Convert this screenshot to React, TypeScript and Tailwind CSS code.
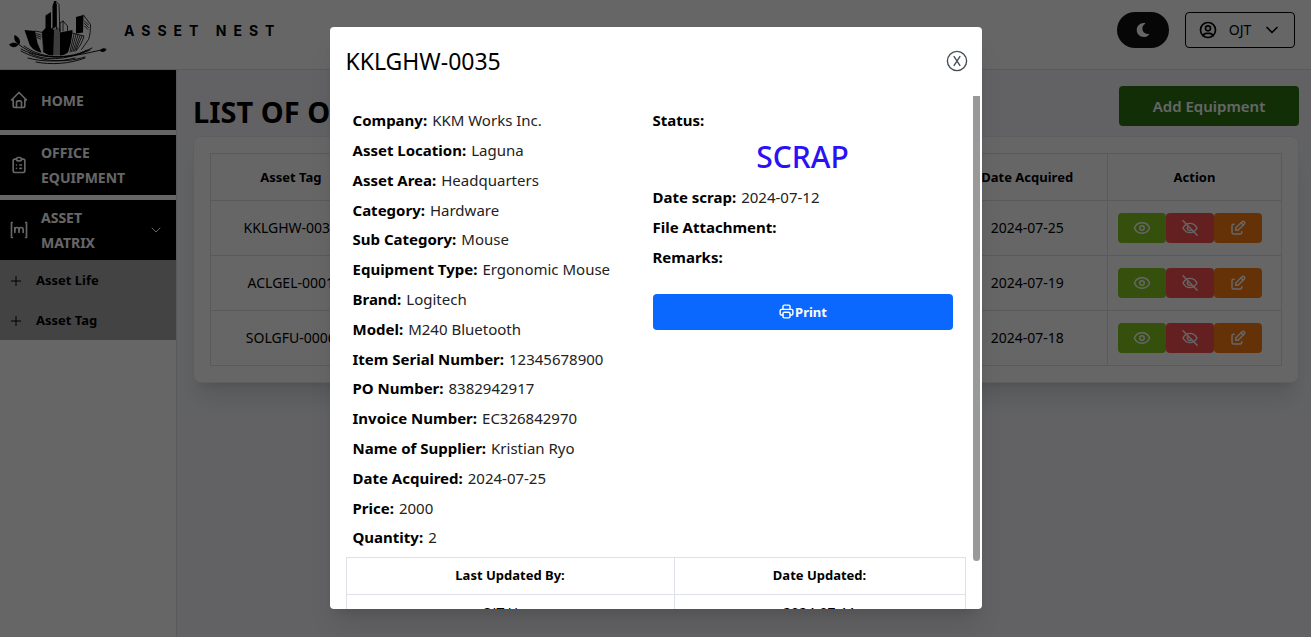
import type { ReactNode } from "react";
import { Eye } from "lucide-react";
import {
  TbBrandMatrix,
  TbChevronDown,
  TbClipboardList,
  TbEdit,
  TbHome,
  TbPlus,
  TbPrinter,
  TbUserCircle,
} from "react-icons/tb";
import { FaMoon } from "react-icons/fa";

const details: [string, string][] = [
  ["Company", "KKM Works Inc."],
  ["Asset Location", "Laguna"],
  ["Asset Area", "Headquarters"],
  ["Category", "Hardware"],
  ["Sub Category", "Mouse"],
  ["Equipment Type", "Ergonomic Mouse"],
  ["Brand", "Logitech"],
  ["Model", "M240 Bluetooth"],
  ["Item Serial Number", "12345678900"],
  ["PO Number", "8382942917"],
  ["Invoice Number", "EC326842970"],
  ["Name of Supplier", "Kristian Ryo"],
  ["Date Acquired", "2024-07-25"],
  ["Price", "2000"],
  ["Quantity", "2"],
];

const assets = [
  { tag: "KKLGHW-0035", date: "2024-07-25" },
  { tag: "ACLGEL-0001", date: "2024-07-19" },
  { tag: "SOLGFU-0006", date: "2024-07-18" },
];

function Logo() {
  return (
    <svg viewBox="0 0 110 68" className="h-[68px] w-[110px]" fill="none" stroke="#000" strokeLinecap="round" aria-hidden="true">
      <g fill="#000" stroke="none">
        <path d="M24.500 29l10.500 1 2.500 12 4 9.500c-5-.5-10-4-12-8z" />
        <path d="M42 31l3.500-4V14.500L51 11v16l3 2-.500 25.500c-4 0-7-1-9.500-3z" />
        <path d="M52.500 5l2-6 1.500 1 .500 25-4 3z" />
        <path d="M60 31.500l12.500-2.500c-.500 9-2 15-4.500 22.500-2.500 2-5 3-8 3z" />
        <path d="M76 16l7.500-2-.500 17.500-7 1z" />
        <path d="M9 43.500c3-2.500 7-2.500 9.500 0-2.500 3.500-7 3.500-9.500 0z" />
        <path d="M14.500 34c4.500 2 6.500 5.500 5 9.500-4-1.500-6-5-5-9.500z" />
        <path d="M100 50c1-3 4-3.500 6.500-2-1 3-4 4-6.500 2z" />
      </g>
      <g strokeWidth=".8">
        <path d="M35 30l7.500 1.500M42.500 31l1 20M36 32.500l5 1.500M36.500 34.500l4.500 1.500M37 36.500l3.500 1.500" />
        <path d="M54.500-1L59 3.500 60 31M56.500 3v25M51 28l5-2.500 4 4M55 28v26M57 28v26M59 30v24" />
        <path d="M60 22l3-2 4.500 5v4.500M60 22v8M63 20v10" />
        <path d="M83.500 14l7 9.500c0 6-.5 11-2 15l-7 10M84.500 20l4 4M84.500 22.500l4 4M84.500 25l3.500 3.500" />
        <path d="M72 32l12 3c-1.500 6-4 10-8 15M74 33l-4 18M76 33.500l-4.500 17M78 34l-5 16.500M80 34.500l-5.500 15.500M82 35l-6 14" />
      </g>
      <g strokeWidth=".9">
        <path d="M18 43c12 9 25 14 43 13 15-1 27-4 40-7" />
        <path d="M21 48c16 9 48 12 71-1M24 45c15 11 40 16 66 4M29 52c14 8 38 8 58-3" />
        <path d="M21 50c18 10 42 13 64 6M28 57c14 4 32 4 47 0M36 61c15 3 33 2 49-4" />
      </g>
    </svg>
  );
}

function CrossedEye() {
  return (
    <svg viewBox="0 0 18 18" className="size-[18px]" fill="none" stroke="currentColor" strokeWidth="1.4" strokeLinecap="round" aria-hidden="true">
      <path d="M2 9c3.200-6.200 10.800-6.200 14 0-3.200 6.200-10.800 6.200-14 0z" />
      <path d="M2 1.800L16.200 16.200M7.200 7.200a2.500 2.500 0 0 0 3.600 3.600" />
    </svg>
  );
}

function CloseIcon() {
  return (
    <svg viewBox="0 0 22 22" className="size-[22px]" fill="none" stroke="#495057" aria-hidden="true">
      <circle cx="11" cy="11" r="9.600" strokeWidth="1.400" />
      <path d="M7.800 6.200l6.400 9.600M14.200 6.200l-6.400 9.600" strokeWidth="1.400" />
    </svg>
  );
}

function NavItem({ icon, label, children }: { icon: ReactNode; label: string; children?: ReactNode }) {
  return (
    <a href="#" className="flex h-[60px] items-center bg-black pr-3 pl-[9px] text-sm font-bold text-white">
      {icon}
      <span className="ml-3 max-w-24 flex-1 leading-[25px]">{label}</span>
      {children}
    </a>
  );
}

function SubItem({ label }: { label: string }) {
  return (
    <a href="#" className="flex h-10 items-center gap-3 pt-[2px] pl-2 text-[13px] font-bold text-black">
      <TbPlus className="size-4" strokeWidth={1.5} />
      {label}
    </a>
  );
}

function Detail({ label, value }: { label: string; value?: string }) {
  return (
    <p className="flex items-center gap-[5px]">
      <b>{label}:</b>
      <span className="text-[#222]">{value}</span>
    </p>
  );
}

const cell = "border border-[#dee2e6] text-center";
const action = "flex h-[30px] w-12 items-center justify-center rounded";

export default function App() {
  return (
    <div className="relative flex h-screen flex-col overflow-hidden bg-white font-['Noto_Sans',sans-serif] text-black">
      <header className="flex h-[70px] shrink-0 items-center justify-between border-b border-[#dee2e6] pr-4">
        <div className="flex items-center">
          <Logo />
          <span className="ml-[14px] -mt-2 font-['Inter',sans-serif] text-sm font-bold tracking-[7px]">ASSET NEST</span>
        </div>
        <div className="-mt-[10px] flex gap-4">
          <button aria-label="Dark mode" className="flex h-9 w-[52px] items-center justify-center rounded-full bg-[#111] text-white">
            <FaMoon className="size-[14px]" />
          </button>
          <button className="flex h-9 w-[110px] items-center justify-between rounded border border-black px-3 text-sm">
            <TbUserCircle className="size-5" />
            OJT
            <TbChevronDown className="size-5" />
          </button>
        </div>
      </header>

      <div className="flex min-h-0 flex-1">
        <nav className="w-[177px] shrink-0 border-r border-[#dee2e6]">
          <div className="flex flex-col gap-[5px]">
            <NavItem icon={<TbHome className="size-5" />} label="HOME" />
            <NavItem icon={<TbClipboardList className="size-5" />} label="OFFICE EQUIPMENT" />
            <NavItem icon={<TbBrandMatrix className="size-5" />} label="ASSET MATRIX">
              <TbChevronDown className="ml-auto size-4" strokeWidth={1.5} />
            </NavItem>
          </div>
          <div className="bg-[#a9a9a9]">
            <SubItem label="Asset Life" />
            <SubItem label="Asset Tag" />
          </div>
        </nav>

        <main className="flex-1 bg-[#f4f6fa] pt-4 pr-3 pl-4">
          <div className="flex h-[50px] items-start justify-between">
            <h1 className="text-[29px] leading-[52px] font-bold">LIST OF OFFICE EQUIPMENT</h1>
            <button className="h-10 w-[180px] rounded bg-[#2b7313] text-[15px] font-semibold text-white">
              Add Equipment
            </button>
          </div>
          <div className="rounded-lg border border-[#e9ecef] bg-white p-4 shadow-xl">
            <table className="w-full table-fixed border-collapse text-sm">
              <thead className="text-[13px]">
                <tr className="h-[47px]">
                  <th className={`${cell} w-[15%]`}>Asset Tag</th>
                  <th className={cell}>Company</th>
                  <th className={cell}>Equipment Type</th>
                  <th className={cell}>Model</th>
                  <th className={`${cell} w-[15%]`}>Date Acquired</th>
                  <th className={`${cell} w-[174px]`}>Action</th>
                </tr>
              </thead>
              <tbody>
                {assets.map((a) => (
                  <tr key={a.tag} className="h-[55px]">
                    <td className={cell}>{a.tag}</td>
                    <td className={cell} />
                    <td className={cell} />
                    <td className={cell} />
                    <td className={cell}>{a.date}</td>
                    <td className={cell}>
                      <div className="flex pl-[10px] text-white">
                        <button aria-label="View" className={`${action} bg-[#82c91e]`}>
                          <Eye className="size-[18px]" />
                        </button>
                        <button aria-label="Hide" className={`${action} bg-[#fa5252]`}>
                          <CrossedEye />
                        </button>
                        <button aria-label="Edit" className={`${action} bg-[#fd7e14]`}>
                          <TbEdit className="size-[18px]" />
                        </button>
                      </div>
                    </td>
                  </tr>
                ))}
              </tbody>
            </table>
          </div>
        </main>
      </div>

      <div className="absolute inset-0 flex items-center justify-center bg-black/60">
        <section
          role="dialog"
          aria-label="KKLGHW-0035"
          className="relative mt-[-2px] flex h-[582px] w-[652px] flex-col overflow-hidden rounded bg-white shadow-xl"
        >
          <header className="flex h-[69px] shrink-0 items-center justify-between pr-[14px] pl-4">
            <h2 className="text-[23px]">KKLGHW-0035</h2>
            <button aria-label="Close">
              <CloseIcon />
            </button>
          </header>
          <div className="min-h-0 flex-1 overflow-y-auto px-4 text-[15px] [scrollbar-width:none]">
            <div className="flex px-[7px] pt-[9px]">
              <div className="mt-px grid h-[447px] w-[300px] auto-rows-fr">
                {details.map(([label, value]) => (
                  <Detail key={label} label={label} value={value} />
                ))}
              </div>
              <div className="w-[300px] leading-[30px]">
                <Detail label="Status" />
                <p className="mb-1 text-center text-[30px] leading-[43px] font-medium text-[#2a12f5]">SCRAP</p>
                <Detail label="Date scrap" value="2024-07-12" />
                <Detail label="File Attachment" />
                <Detail label="Remarks" />
                <button className="mt-[22px] flex h-9 w-full items-center justify-center rounded bg-[#0b68ff] text-[13px] font-bold text-white">
                  <TbPrinter className="size-[17px]" />
                  Print
                </button>
              </div>
            </div>
            <table className="mt-1 w-full table-fixed border-collapse text-sm">
              <thead className="text-[13px]">
                <tr className="h-[37px]">
                  <th className={`${cell} w-[53%]`}>Last Updated By:</th>
                  <th className={cell}>Date Updated:</th>
                </tr>
              </thead>
              <tbody>
                <tr className="h-[37px]">
                  <td className={cell}>OJT User</td>
                  <td className={cell}>2024-07-11</td>
                </tr>
              </tbody>
            </table>
          </div>
          <div className="absolute top-[69px] right-[2px] h-[465px] w-[7px] rounded-b-full bg-[#999]" />
        </section>
      </div>
    </div>
  );
}
